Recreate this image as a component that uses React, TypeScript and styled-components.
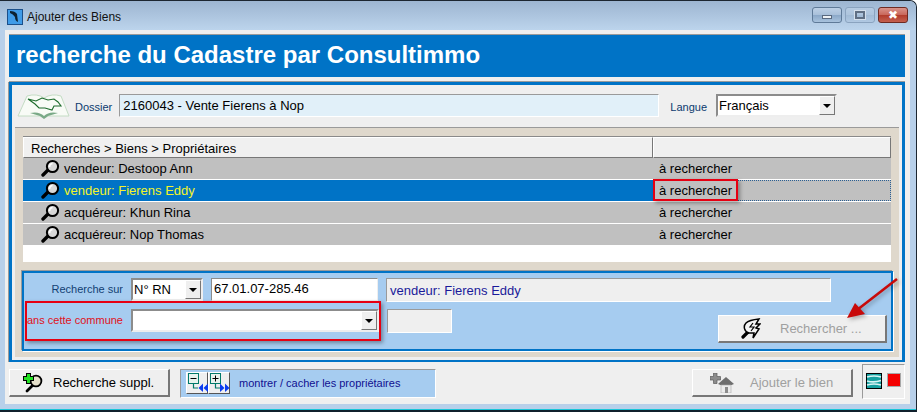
import React from 'react'
import styled, { createGlobalStyle } from 'styled-components'

const blue = '#0073c6'
const paleBlue = '#a6ccf0'

const rows = [
    { label: 'vendeur: Destoop Ann', selected: false },
    { label: 'vendeur: Fierens Eddy', selected: true },
    { label: 'acquéreur: Khun Rina', selected: false },
    { label: 'acquéreur: Nop Thomas', selected: false },
]

const Lens = () => (
    <svg width="19" height="19" viewBox="0 0 19 19">
        <path d="M7 11 L2 16" stroke="#000" strokeWidth="3.4" strokeLinecap="round" />
        <circle cx="11.5" cy="7.5" r="5.6" fill="#d8d8d8" stroke="#000" strokeWidth="2" />
        <path d="M8.5 8 A3.4 3.4 0 0 1 11.5 4.5" fill="none" stroke="#fff" strokeWidth="1.6" />
    </svg>
)

const PlusLens = () => (
    <svg width="20" height="20" viewBox="0 0 20 20">
        <path d="M9 13 L4 18" stroke="#000" strokeWidth="2.8" strokeLinecap="round" />
        <circle cx="13" cy="8" r="5.4" fill="#e6e0cc" stroke="#000" strokeWidth="1.8" />
        <path d="M5.5 0 V11 M0 5.5 H11" stroke="#000" strokeWidth="5" />
        <path d="M5.5 1 V10 M1 5.5 H10" stroke="#22e022" strokeWidth="3" />
    </svg>
)

const BoltLens = () => (
    <svg width="20" height="22" viewBox="0 0 20 22">
        <path d="M7 14 L2 19" stroke="#000" strokeWidth="3.2" strokeLinecap="round" />
        <path d="M5 5 Q8 2 18 1 L15 6 L19 6 L15 10 L18 11 L12 20 L13 15 L8 15 A6 6 0 0 1 5 5 Z" fill="#f4f4f4" stroke="#000" strokeWidth="1.5" />
        <path d="M12 5 L9 9 L13 9 L10 13" fill="none" stroke="#000" strokeWidth="1.2" />
    </svg>
)

const House = () => (
    <svg width="24" height="20" viewBox="0 0 24 20">
        <path d="M3.5 0 H7 V3.5 H10.5 V7 H7 V10.5 H3.5 V7 H0 V3.5 H3.5 Z" fill="#8c8c8c" stroke="#5c5c5c" strokeWidth="0.7" />
        <path d="M8 11 L16 4 L24 11 L21.5 12 H10.5 Z" fill="#6e6e6e" />
        <path d="M11 12 H21 V20 H11 Z" fill="#ececec" stroke="#a8a8a8" strokeWidth="0.6" />
        <rect x="15" y="14" width="3" height="6" fill="#8c8c8c" />
    </svg>
)

const TreeToggle = ({ open }: { open: boolean }) => (
    <svg width="20" height="19" viewBox="0 0 20 19">
        <rect x="0.5" y="0.5" width="10" height="10" fill="#e8f4ee" stroke="#007a6a" />
        <path d={open ? 'M2.5 5.5 H8.5 M5.5 2.5 V8.5' : 'M2.5 5.5 H8.5'} stroke="#000" strokeWidth="1" />
        <path d="M5.5 11 V15 H10" fill="none" stroke="#007a6a" strokeWidth="1.2" />
        {open
            ? <path d="M10 10.5 L14.5 15 L10 19 Z M15 10.5 L19.5 15 L15 19 Z" fill="#0a3cf0" />
            : <path d="M15 10.5 L10.5 15 L15 19 Z M20 10.5 L15.5 15 L20 19 Z" fill="#0a3cf0" />}
    </svg>
)

const BookLogo = () => (
    <svg width="53" height="26" viewBox="0 0 53 26">
        <path d="M1 23 L10 3 Q20 0 27 5 Q35 0 44 3 L52 23 L31 23 L27 25 L23 23 Z" fill="#f8fbf6" stroke="#c4dcc4" strokeWidth="1" />
        <path d="M11 6 L19 8 L25 5 L31 7 L37 6 L41 9 L44 13 L37 13 L35 17 L28 15 L22 15 L18 11 Z" fill="none" stroke="#1d6b2c" strokeWidth="1.1" />
        <path d="M13 20 Q22 18 27 23 Q32 18 41 20 L31 23 L27 26 L23 23 Z" fill="#7aa987" />
    </svg>
)

const AppIcon = () => (
    <svg width="16" height="16" viewBox="0 0 16 16">
        <rect x="0.5" y="0.5" width="15" height="15" fill="#3f9be8" stroke="#1b4f8a" />
        <path d="M3 2 Q8 2 10 5 L11 13 Q8 12 8 8 Q6 5 3 4 Z" fill="#0d2233" />
    </svg>
)

const StatusIcon = () => (
    <svg width="16" height="16" viewBox="0 0 16 16">
        <rect x="0.5" y="0.5" width="15" height="15" fill="#16a0a0" stroke="#000" />
        <path d="M1 4 Q8 2 15 4 M1 8 Q8 10 15 7.5 M1 12 Q8 10 15 12" stroke="#d8f4f4" strokeWidth="1.6" fill="none" />
    </svg>
)

export default function App() {
    return (
        <>
            <GlobalStyle />
            <Window>
                <TitleBar>
                    <AppIcon />
                    <TitleText>Ajouter des Biens</TitleText>
                    <WindowButtons>
                        <WinButton><MinGlyph /></WinButton>
                        <WinButton $faded><MaxGlyph /></WinButton>
                        <WinButton $close><CloseGlyph>✖</CloseGlyph></WinButton>
                    </WindowButtons>
                </TitleBar>
                <Client>
                    <Banner>recherche du Cadastre par Consultimmo</Banner>
                    <MainPanel>
                        <DossierRow>
                            <BookLogo />
                            <SmallLabel $ml={5}>Dossier</SmallLabel>
                            <DossierInput>2160043 - Vente Fierens à Nop</DossierInput>
                            <SmallLabel $ml={11}>Langue</SmallLabel>
                            <Combo $width={121} $ml={9}>
                                <ComboText>Français</ComboText>
                                <ComboArrow />
                            </Combo>
                        </DossierRow>
                        <BeigePanel>
                            <Tree>
                                <TreeHeader>
                                    <HeaderCell $width={630}>Recherches &gt; Biens &gt; Propriétaires</HeaderCell>
                                    <HeaderCell $width={238} />
                                </TreeHeader>
                                {rows.map((row) => (
                                    <TreeRow key={row.label}>
                                        <NameCell $selected={row.selected}>
                                            <Lens />
                                            {row.label}
                                        </NameCell>
                                        <StateCell $selected={row.selected}>à rechercher</StateCell>
                                    </TreeRow>
                                ))}
                            </Tree>
                            <SearchPanel>
                                <SearchRow>
                                    <SearchLabel>Recherche sur</SearchLabel>
                                    <Combo $width={72}>
                                        <ComboText>N° RN</ComboText>
                                        <ComboArrow />
                                    </Combo>
                                    <TextInput>67.01.07-285.46</TextInput>
                                    <ReadOnlyField $width={445}>vendeur: Fierens Eddy</ReadOnlyField>
                                </SearchRow>
                                <SearchRow>
                                    <SearchLabel $red>dans cette commune</SearchLabel>
                                    <Combo $width={248}>
                                        <ComboText />
                                        <ComboArrow />
                                    </Combo>
                                    <ReadOnlyField $width={65} />
                                    <SearchButton>
                                        <BoltLens />
                                        <span>Rechercher ...</span>
                                    </SearchButton>
                                </SearchRow>
                            </SearchPanel>
                        </BeigePanel>
                    </MainPanel>
                    <Footer>
                        <ActionButton>
                            <PlusLens />
                            <span>Recherche suppl.</span>
                        </ActionButton>
                        <TogglePanel>
                            <ToggleButton><TreeToggle open={false} /></ToggleButton>
                            <ToggleButton><TreeToggle open /></ToggleButton>
                            <ToggleText>montrer / cacher les propriétaires</ToggleText>
                        </TogglePanel>
                        <ActionButton $disabled $push>
                            <House />
                            <span>Ajouter le bien</span>
                        </ActionButton>
                        <StatusBox>
                            <StatusIcon />
                            <StatusLight />
                        </StatusBox>
                    </Footer>
                </Client>
                <RedMark $left={653} $top={179} $width={85} $height={22} />
                <RedMark $left={25} $top={301} $width={356} $height={40} />
                <Arrow viewBox="0 0 60 50" width="60" height="50">
                    <path d="M55 3 L15 34" stroke="#c80a0a" strokeWidth="2.6" />
                    <path d="M5 42 L13 27 L23 38 Z" fill="#c80a0a" />
                </Arrow>
            </Window>
        </>
    )
}

const GlobalStyle = createGlobalStyle`
    html, body {
        margin: 0;
        background: #fff;
        overflow: hidden;
    }
    body {
        font-family: "Liberation Sans", Arial, sans-serif;
        font-size: 13px;
        color: #000;
    }
`

const Window = styled.div`
    position: relative;
    box-sizing: border-box;
    width: 917px;
    height: 412px;
    display: flex;
    flex-direction: column;
    background: #b8d0ea;
    border: 1px solid #1c2530;
    border-left: none;
    border-bottom: 2px solid #10202c;
    border-radius: 0 7px 0 0;
    box-shadow: inset 0 -1px 0 #19c5d8;
`

const TitleBar = styled.div`
    height: 29px;
    flex: none;
    display: flex;
    align-items: center;
    padding: 2px 8px 0 7px;
    box-sizing: border-box;
    background: linear-gradient(#9db5d1, #bcd4ec);
    border-radius: 0 7px 0 0;
`

const TitleText = styled.span`
    margin-left: 4px;
    font-size: 12px;
    color: #111;
`

const WindowButtons = styled.div`
    margin-left: auto;
    display: flex;
    gap: 3px;
    margin-top: -3px;
`

const WinButton = styled.div<{ $close?: boolean; $faded?: boolean }>`
    width: 30px;
    height: 16px;
    box-sizing: border-box;
    display: flex;
    align-items: center;
    justify-content: center;
    border: 1px solid ${({ $close, $faded }) => ($close ? '#6e2a22' : $faded ? '#8aa3bf' : '#5f7a98')};
    border-radius: 3px;
    background: ${({ $close, $faded }) =>
        $close
            ? 'linear-gradient(#d9938a 0%, #c9685c 48%, #b23c2c 52%, #c4604f 100%)'
            : $faded
              ? 'linear-gradient(#b6cbe2 0%, #adc4dd 48%, #a2bbd6 52%, #b0c8e2 100%)'
              : 'linear-gradient(#bdd0e6 0%, #a9c0da 48%, #8ba8c8 52%, #a8c2dd 100%)'};
`

const MinGlyph = styled.i`
    display: block;
    width: 10px;
    height: 4px;
    margin-top: 3px;
    background: #eef2f6;
    border: 1px solid #5a6a80;
    box-sizing: border-box;
`

const MaxGlyph = styled.i`
    display: block;
    width: 10px;
    height: 8px;
    box-sizing: border-box;
    border: 2px solid #5f6f84;
    outline: 1px solid #d5e0ec;
`

const CloseGlyph = styled.span`
    font-size: 12px;
    line-height: 12px;
    color: #fff;
    font-family: "DejaVu Sans", sans-serif;
`

const Client = styled.div`
    flex: none;
    width: 905px;
    height: 374px;
    box-sizing: border-box;
    margin-left: 5px;
    padding: 4px 5px 0 4px;
    display: flex;
    flex-direction: column;
    background: #efefef;
`

const Banner = styled.div`
    flex: none;
    height: 43px;
    box-sizing: border-box;
    padding: 6px 0 0 7px;
    border-top: 1px solid #9a9a9a;
    background: ${blue};
    color: #fff;
    font-size: 24px;
    font-weight: bold;
`

const MainPanel = styled.div`
    flex: none;
    height: 280px;
    box-sizing: border-box;
    margin-top: 5px;
    border: 3px solid ${blue};
    border-bottom-width: 2px;
    box-shadow: 0 -1px 0 #9a9a9a, -1px 0 0 #9a9a9a;
    background: #efefef;
`

const DossierRow = styled.div`
    display: flex;
    align-items: center;
    height: 23px;
    margin-top: 9px;
    padding-left: 5px;
`

const SmallLabel = styled.span<{ $ml: number }>`
    margin-left: ${({ $ml }) => $ml}px;
    margin-top: 2px;
    font-size: 11px;
    color: #0b3a6e;
`

const DossierInput = styled.div`
    width: 540px;
    height: 23px;
    box-sizing: border-box;
    margin-left: 7px;
    padding: 3px 0 0 3px;
    background: #e1f0f9;
    border: 1px solid #fff;
    border-top-color: #9a9a9a;
    border-left-color: #9a9a9a;
`

const Combo = styled.div<{ $width: number; $ml?: number }>`
    width: ${({ $width }) => $width}px;
    height: 23px;
    flex: none;
    box-sizing: border-box;
    margin-left: ${({ $ml }) => $ml ?? 0}px;
    display: flex;
    background: #fff;
    border: 2px solid;
    border-color: #8c8c8c #eee #eee #8c8c8c;
`

const ComboText = styled.div`
    flex: 1;
    padding: 2px 0 0 1px;
    font-size: 13px;
`

const ComboArrow = styled.div`
    position: relative;
    width: 16px;
    flex: none;
    box-sizing: border-box;
    background: #efefef;
    border: 1px solid;
    border-color: #fff #777 #777 #fff;

    &::after {
        content: '';
        position: absolute;
        left: 3px;
        top: 7px;
        border: 4px solid transparent;
        border-top: 4px solid #000;
        border-bottom: none;
    }
`

const BeigePanel = styled.div`
    height: 230px;
    box-sizing: border-box;
    margin: 10px 3px 0;
    padding: 8px 8px 0;
    background: #dfd8cc;
    border-top: 1px solid #9a9a9a;
`

const Tree = styled.div`
    height: 126px;
    box-sizing: border-box;
    background: #fff;
    border-top: 1px solid #8a8a8a;
`

const TreeHeader = styled.div`
    display: flex;
    height: 21px;
`

const HeaderCell = styled.div<{ $width: number }>`
    width: ${({ $width }) => $width}px;
    box-sizing: border-box;
    padding: 3px 0 0 7px;
    background: #f0f0f0;
    border: 1px solid;
    border-color: #fff #777 #777 #fff;
    line-height: 15px;
`

const TreeRow = styled.div`
    display: flex;
    height: 21px;
    margin-bottom: 1px;
    background: #c0c0c0;
`

const NameCell = styled.div<{ $selected: boolean }>`
    width: 630px;
    display: flex;
    align-items: center;
    gap: 4px;
    padding-left: 18px;
    box-sizing: border-box;
    background: ${({ $selected }) => ($selected ? blue : 'transparent')};
    color: ${({ $selected }) => ($selected ? '#f4f42a' : '#000')};
`

const StateCell = styled.div<{ $selected: boolean }>`
    flex: 1;
    display: flex;
    align-items: center;
    padding-left: 6px;
    outline: ${({ $selected }) => ($selected ? '1px dotted #2b5f93' : 'none')};
    outline-offset: -1px;
`

const SearchPanel = styled.div`
    position: relative;
    height: 80px;
    box-sizing: border-box;
    width: 871px;
    margin: 9px 0 0 -1px;
    padding-top: 5px;
    display: flex;
    flex-direction: column;
    gap: 8px;
    background: ${paleBlue};
    border: 2px solid ${blue};
    box-shadow: -1px -1px 0 #9a9a9a, 1px 1px 0 #fff;
`

const SearchRow = styled.div`
    display: flex;
    height: 23px;
    align-items: flex-start;
`

const SearchLabel = styled.span<{ $red?: boolean }>`
    width: 96px;
    flex: none;
    display: flex;
    justify-content: flex-end;
    overflow: hidden;
    margin: 5px 8px 0 3px;
    font-size: 11px;
    white-space: nowrap;
    color: ${({ $red }) => ($red ? '#e01020' : '#123f73')};
`

const TextInput = styled.div`
    width: 167px;
    height: 23px;
    box-sizing: border-box;
    margin-left: 8px;
    padding: 2px 0 0 2px;
    background: #fff;
    border: 1px solid #eee;
    border-top-color: #8c8c8c;
    border-left-color: #8c8c8c;
`

const ReadOnlyField = styled.div<{ $width: number }>`
    width: ${({ $width }) => $width}px;
    height: 24px;
    flex: none;
    box-sizing: border-box;
    margin-left: 8px;
    padding: 4px 0 0 3px;
    background: #efefef;
    border: 1px solid #fff;
    border-top-color: #9a9a9a;
    border-left-color: #9a9a9a;
    color: #1a1a9a;
`

const SearchButton = styled.div`
    width: 169px;
    height: 28px;
    flex: none;
    box-sizing: border-box;
    margin: 6px 4px 0 auto;
    padding-left: 22px;
    display: flex;
    align-items: center;
    gap: 19px;
    background: #efefef;
    border: 1px solid;
    border-color: #fff #777 #777 #fff;
    border-width: 1px 2px 2px 1px;
    color: #a0a0a0;
`

const Footer = styled.div`
    flex: none;
    display: flex;
    align-items: flex-start;
    height: 42px;
`

const ActionButton = styled.div<{ $disabled?: boolean; $push?: boolean }>`
    width: 161px;
    height: 28px;
    flex: none;
    box-sizing: border-box;
    margin: 7px 0 0 ${({ $push }) => ($push ? 'auto' : '0')};
    padding-left: ${({ $push }) => ($push ? '17px' : '13px')};
    display: flex;
    align-items: center;
    gap: ${({ $push }) => ($push ? '16px' : '10px')};
    background: #efefef;
    border: 1px solid;
    border-color: #fff #777 #777 #fff;
    border-width: 1px 2px 2px 1px;
    color: ${({ $disabled }) => ($disabled ? '#a0a0a0' : '#000')};
`

const TogglePanel = styled.div`
    width: 256px;
    height: 29px;
    flex: none;
    box-sizing: border-box;
    margin: 7px 0 0 10px;
    padding: 2px 0 0 5px;
    display: flex;
    align-items: flex-start;
    background: ${paleBlue};
    border: 1px solid #fff;
    border-top-color: #9a9a9a;
    border-left-color: #9a9a9a;
`

const ToggleButton = styled.div`
    width: 22px;
    height: 22px;
    box-sizing: border-box;
    padding: 0 0 0 1px;
    background: #efefef;
    border: 1px solid;
    border-color: #fff #555 #555 #fff;
`

const ToggleText = styled.span`
    margin: 4px 0 0 9px;
    font-size: 11px;
    line-height: 14px;
    white-space: nowrap;
    color: #101090;
`

const StatusBox = styled.div`
    width: 43px;
    height: 35px;
    flex: none;
    box-sizing: border-box;
    margin: 2px 0 0 9px;
    padding: 8px 0 0 3px;
    display: flex;
    align-items: flex-start;
    gap: 6px;
    border: 1px solid #fff;
    border-top-color: #9a9a9a;
    border-left-color: #9a9a9a;
`

const StatusLight = styled.div`
    width: 12px;
    height: 12px;
    margin-top: 1px;
    background: #f40000;
    box-shadow: 0 0 0 1px #a8a8a8;
`

const RedMark = styled.div<{ $left: number; $top: number; $width: number; $height: number }>`
    position: absolute;
    left: ${({ $left }) => $left}px;
    top: ${({ $top }) => $top - 1}px;
    width: ${({ $width }) => $width}px;
    height: ${({ $height }) => $height}px;
    box-sizing: border-box;
    border: 2px solid #e60012;
    box-shadow: 2px 2px 4px rgba(0, 0, 0, 0.35);
`

const Arrow = styled.svg`
    position: absolute;
    left: 842px;
    top: 275px;
    overflow: visible;
    filter: drop-shadow(2px 2px 2px rgba(0, 0, 0, 0.3));
`
